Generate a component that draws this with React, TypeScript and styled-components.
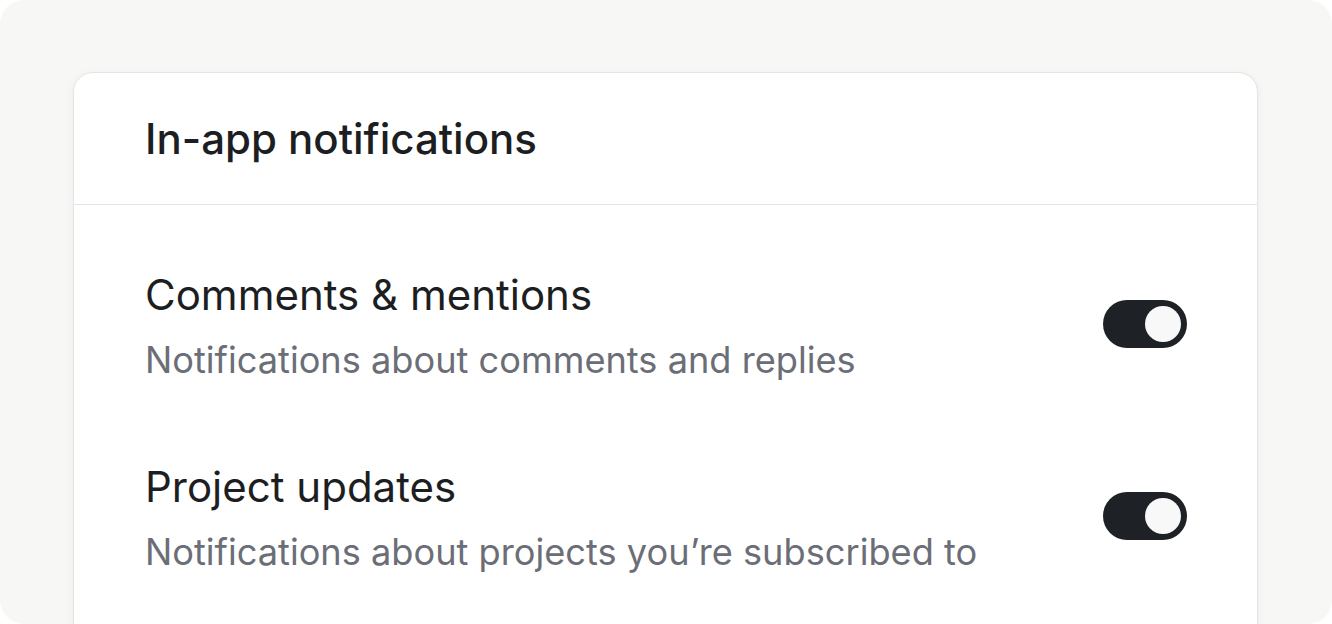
import React from "react";
import styled, { createGlobalStyle } from "styled-components";

const Global = createGlobalStyle`
  html, body { margin: 0; padding: 0; background: #ffffff; }
  body { font-family: Inter, "Noto Sans", sans-serif; -webkit-font-smoothing: antialiased; }
  * { box-sizing: border-box; }
`;

const Page = styled.div`
  width: 1332px;
  height: 624px;
  background: #f7f7f6;
  border-radius: 24px;
  overflow: hidden;
  padding: 72px 74px 0 73px;
`;

const Card = styled.div`
  background: #ffffff;
  border: 1px solid #e4e4e6;
  border-radius: 20px;
  box-shadow: 0 2px 10px rgba(0, 0, 0, 0.05);
  height: 640px;
`;

const Header = styled.div`
  height: 132px;
  display: flex;
  align-items: center;
  padding: 0 71px;
  border-bottom: 1px solid #e4e4e7;
`;

const HeaderTitle = styled.h2`
  margin: 0;
  font-size: 42px;
  line-height: 52px;
  font-weight: 500;
  color: #1c1e22;
`;

const List = styled.div`
  padding: 23px 70px 0 71px;
  display: flex;
  flex-direction: column;
`;

const Row = styled.div`
  display: flex;
  align-items: center;
  justify-content: space-between;
  padding: 37px 0;
`;

const Texts = styled.div`
  display: flex;
  flex-direction: column;
  padding-top: 4px;
`;

const Title = styled.div`
  font-size: 42px;
  line-height: 52px;
  font-weight: 400;
  color: #1c1e22;
`;

const Subtitle = styled.div`
  margin-top: 16px;
  font-size: 36.2px;
  line-height: 46px;
  color: #6b6e76;
`;

const Toggle = styled.button<{ $on: boolean }>`
  width: 84px;
  height: 48px;
  border-radius: 24px;
  border: none;
  padding: 6px;
  background: ${(p) => (p.$on ? "#1e2125" : "#d4d4d8")};
  display: flex;
  justify-content: ${(p) => (p.$on ? "flex-end" : "flex-start")};
  align-items: center;
  cursor: pointer;
  flex-shrink: 0;
`;

const Knob = styled.span`
  width: 36px;
  height: 36px;
  border-radius: 50%;
  background: #f8f8f8;
`;

const items = [
  { title: "Comments & mentions", desc: "Notifications about comments and replies" },
  { title: "Project updates", desc: "Notifications about projects you\u2019re subscribed to" },
];

export default function App() {
  return (
    <>
      <Global />
      <Page>
        <Card>
          <Header>
            <HeaderTitle>In-app notifications</HeaderTitle>
          </Header>
          <List>
            {items.map((it) => (
              <Row key={it.title}>
                <Texts>
                  <Title>{it.title}</Title>
                  <Subtitle>{it.desc}</Subtitle>
                </Texts>
                <Toggle $on aria-label={it.title}>
                  <Knob />
                </Toggle>
              </Row>
            ))}
          </List>
        </Card>
      </Page>
    </>
  );
}
